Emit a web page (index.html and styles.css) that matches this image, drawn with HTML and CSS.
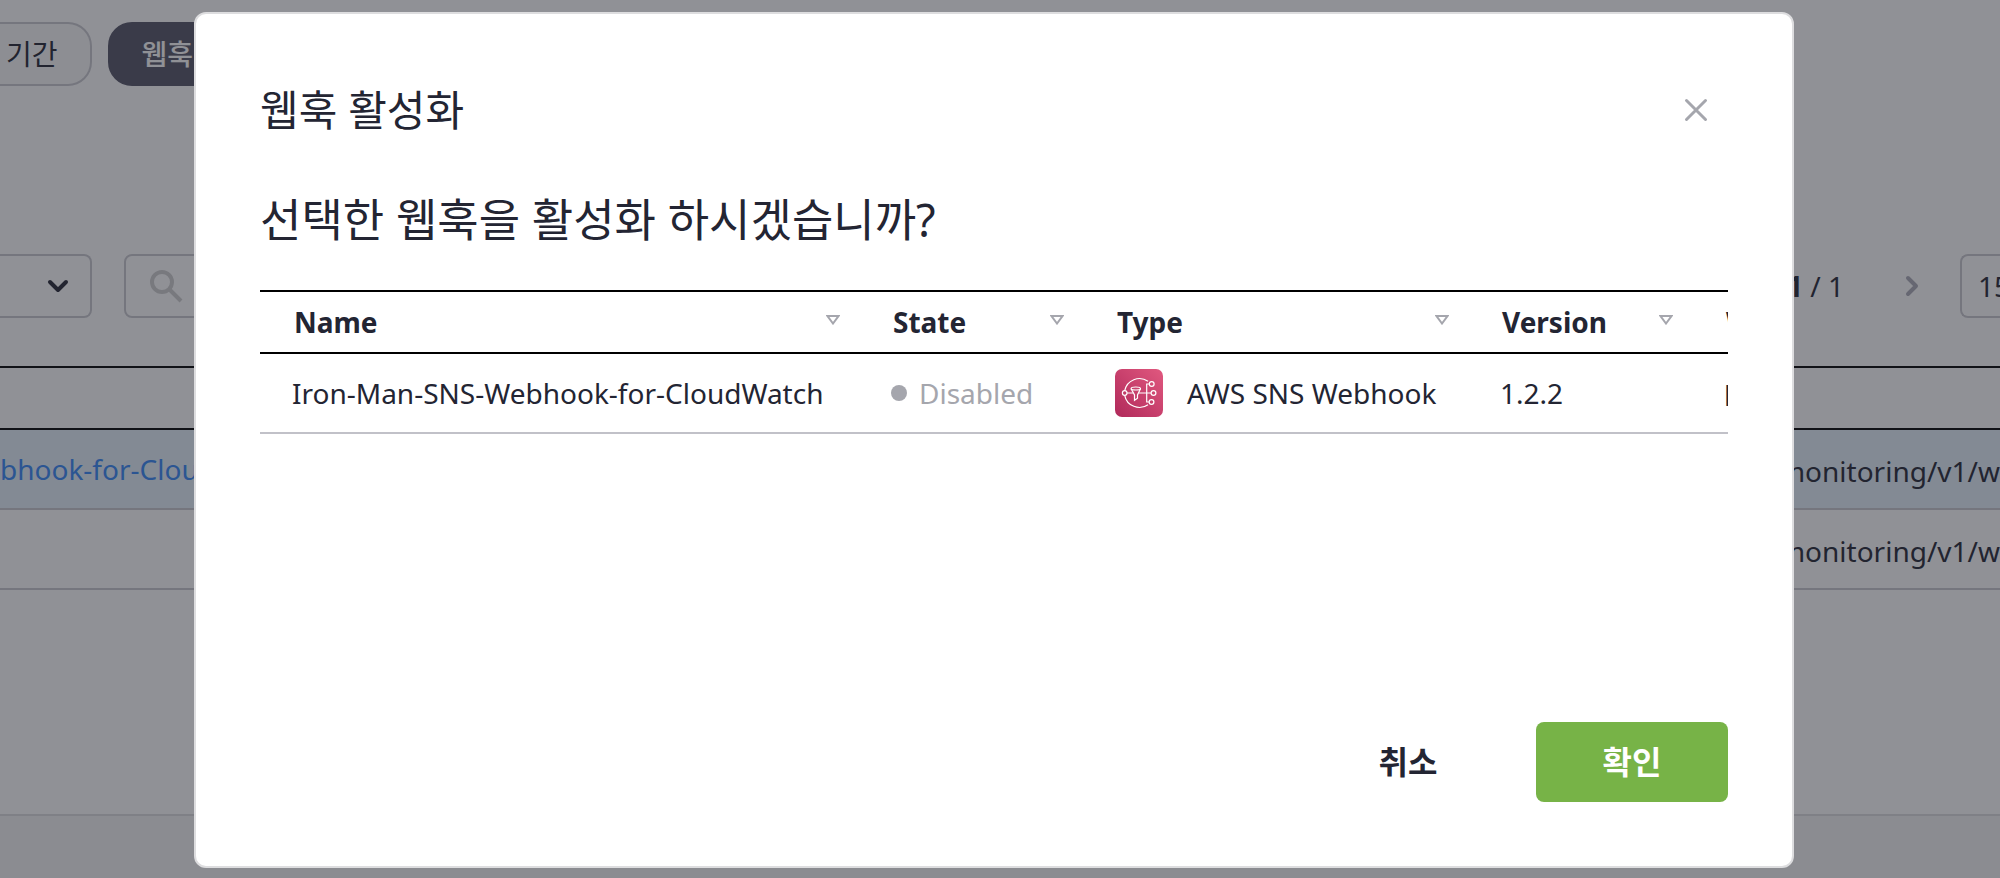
FILE: index.html
```html
<!DOCTYPE html>
<html lang="ko">
<head>
<meta charset="utf-8">
<meta name="viewport" content="width=device-width, initial-scale=1">
<title>웹훅 활성화</title>
<link rel="stylesheet" href="styles.css">
</head>
<body>
<div class="page" inert>
  <nav class="chips">
    <button class="chip chip-cut" type="button">기간</button>
    <button class="chip chip-active" type="button">웹훅</button>
  </nav>
  <div class="toolbar">
    <div class="dropdown">
      <select class="dropdown-select" aria-label="작업"><option></option></select>
      <svg class="dropdown-icon" width="24" height="24" viewBox="0 0 24 24"><path d="M4 8l8 8 8-8"/></svg>
    </div>
    <label class="search">
      <svg class="search-icon" width="36" height="36" viewBox="0 0 36 36"><circle cx="14" cy="14" r="10"/><path d="M22 22l11 11"/></svg>
      <input class="search-input" type="text" aria-label="검색">
    </label>
    <div class="pager">
      <span><b>1</b> / 1</span>
      <button class="pager-next" type="button" aria-label="다음">
        <svg width="24" height="24" viewBox="0 0 24 24"><path d="M8 4l8 8-8 8"/></svg>
      </button>
    </div>
    <select class="page-size" aria-label="페이지 크기"><option>15</option></select>
  </div>
  <table class="list">
    <thead><tr><th></th><th></th></tr></thead>
    <tbody>
      <tr class="selected"><td><a href="#">bhook-for-CloudWatch</a></td><td class="url">monitoring/v1/w</td></tr>
      <tr><td></td><td class="url">monitoring/v1/w</td></tr>
    </tbody>
  </table>
  <div class="page-footer"></div>
</div>

<div class="backdrop">
  <section class="modal" role="dialog" aria-modal="true" aria-labelledby="modal-title">
    <header class="modal-header">
      <h1 class="modal-title" id="modal-title">웹훅 활성화</h1>
      <button class="close" type="button" aria-label="닫기">
        <svg width="32" height="32" viewBox="0 0 32 32"><path d="M6.500 6.500l19 19M25.500 6.500l-19 19"/></svg>
      </button>
    </header>
    <p class="question">선택한 웹훅을 활성화 하시겠습니까?</p>
    <div class="table-wrap">
      <table class="grid">
        <colgroup><col class="col-name"><col class="col-small"><col class="col-type"><col class="col-small"><col class="col-url"></colgroup>
        <thead>
          <tr>
            <th><div class="head">Name<svg class="sort" width="14" height="10" viewBox="0 0 14 10"><path d="M1.500 1h11L7 8.500z"/></svg></div></th>
            <th><div class="head">State<svg class="sort" width="14" height="10" viewBox="0 0 14 10"><path d="M1.500 1h11L7 8.500z"/></svg></div></th>
            <th><div class="head">Type<svg class="sort" width="14" height="10" viewBox="0 0 14 10"><path d="M1.500 1h11L7 8.500z"/></svg></div></th>
            <th><div class="head">Version<svg class="sort" width="14" height="10" viewBox="0 0 14 10"><path d="M1.500 1h11L7 8.500z"/></svg></div></th>
            <th><div class="head">Webhook URL</div></th>
          </tr>
        </thead>
        <tbody>
          <tr>
            <td>Iron-Man-SNS-Webhook-for-CloudWatch</td>
            <td><span class="state">Disabled</span></td>
            <td>
              <div class="type">
                <svg width="48" height="48" viewBox="0 0 48 48">
                  <defs><linearGradient id="sns" x1="0" y1="1" x2="1" y2="0"><stop offset="0" stop-color="#b0295a"/><stop offset="1" stop-color="#e0587f"/></linearGradient></defs>
                  <rect width="48" height="48" rx="7" fill="url(#sns)"/>
                  <g fill="none" stroke="#fff" stroke-width="1.200">
                    <path d="M33 12.300A15 15 0 0 0 9.700 21.700M9.700 26.300A15 15 0 0 0 33 35.700"/>
                    <circle cx="9.700" cy="24" r="2.300"/>
                    <path d="M12 24h6M24 24h12M34.300 15h-2.600v18h2.600"/>
                    <circle cx="36.700" cy="15" r="2.400"/>
                    <circle cx="38.500" cy="24" r="2.400"/>
                    <circle cx="36.500" cy="33" r="2.400"/>
                    <ellipse cx="20.800" cy="19.500" rx="4.700" ry="1.500"/>
                    <path d="M16.100 19.700l3.400 6.300v5.300l3-2v-3.300l3-6.300"/>
                  </g>
                </svg>
                <span>AWS SNS Webhook</span>
              </div>
            </td>
            <td>1.2.2</td>
            <td class="url">https</td>
          </tr>
        </tbody>
      </table>
    </div>
    <footer class="actions">
      <button class="btn" type="button">취소</button>
      <button class="btn btn-primary" type="button">확인</button>
    </footer>
  </section>
</div>
</body>
</html>
```
FILE: styles.css
```css
* { box-sizing: border-box; }

body {
  margin: 0;
  background: #fff;
  color: #232533;
  font: 28px/40px "Noto Sans", "Noto Sans CJK KR", sans-serif;
}

button, input, select { font: inherit; color: inherit; margin: 0; }
button { padding: 0; border: 0; background: none; cursor: pointer; }
svg { display: block; flex: none; }
table { border-collapse: separate; border-spacing: 0; table-layout: fixed; }

/* List page */
.page {
  display: flex;
  flex-direction: column;
  height: 100vh;
  overflow: hidden;
}

.chips { display: flex; gap: 16px; padding-top: 22px; }
.chip {
  height: 64px;
  padding: 0 32px;
  border: 2px solid #c9c9cf;
  border-radius: 24px;
  background: #f9f9f9;
}
.chip-cut { padding-left: 6px; border-left: 0; border-radius: 0 24px 24px 0; }
.chip-active { border-color: #535365; background: #535365; color: #fff; font-weight: 500; }

.toolbar { display: flex; align-items: center; margin-top: 168px; }
.dropdown {
  display: flex;
  align-items: center;
  width: 92px;
  height: 64px;
  padding-right: 20px;
  border: 2px solid #c9c9cf;
  border-left: 0;
  border-radius: 0 8px 8px 0;
}
.dropdown-select { flex: 1; min-width: 0; border: 0; background: none; appearance: none; }
.dropdown-icon { fill: none; stroke: #232533; stroke-width: 4; stroke-linecap: round; stroke-linejoin: round; }
.search {
  display: flex;
  align-items: center;
  width: 40%;
  height: 64px;
  margin-left: 32px;
  padding: 0 22px;
  border: 2px solid #c9c9cf;
  border-radius: 8px;
}
.search-icon { fill: none; stroke: #cfcfcf; stroke-width: 4; }
.search-input { flex: 1; border: 0; background: none; }
.pager { display: flex; align-items: center; gap: 56px; margin-left: auto; }
.pager-next svg { fill: none; stroke: #ababb7; stroke-width: 4; stroke-linecap: round; stroke-linejoin: round; }
.page-size {
  width: 40px;
  height: 64px;
  margin-left: 36px;
  padding: 0 0 0 16px;
  border: 2px solid #c9c9cf;
  border-right: 0;
  border-radius: 8px 0 0 8px;
  background: none;
  appearance: none;
}

.list { width: 100%; margin-top: 48px; }
.list th { height: 64px; padding: 0; border: solid #000; border-width: 2px 0; }
.list td { height: 80px; padding: 0; border-bottom: 2px solid #c9c9cf; }
.list .url { padding-top: 4px; text-align: right; }
.list a { color: #3587f7; text-decoration: none; }
.selected td { background: #e5f1fb; }
.page-footer { height: 64px; margin-top: auto; border-top: 2px solid #dddddf; background: #f5f5f5; }

/* Modal */
.backdrop {
  position: fixed;
  inset: 0;
  display: flex;
  padding: 12px 206px 10px 194px;
  background: rgba(33, 35, 45, 0.5);
}
.modal {
  display: flex;
  flex: 1;
  flex-direction: column;
  min-width: 0;
  padding: 64px;
  border: 2px solid #dddddf;
  border-radius: 12px;
  background: #fff;
}
.modal-header { display: flex; align-items: center; justify-content: space-between; height: 64px; }
.modal-title { margin: 0; font-size: 42px; line-height: 64px; font-weight: 400; }
.close { padding: 16px; }
.close svg { fill: none; stroke: #a5a6ad; stroke-width: 3; stroke-linecap: round; }
.question { margin: 48px 0 40px; font-size: 45px; line-height: 60px; font-weight: 400; }

.table-wrap { overflow: hidden; }
.grid { width: 1834px; }
.col-name { width: 601px; }
.col-small { width: 224px; }
.col-type { width: 385px; }
.col-url { width: 400px; }
.grid th {
  height: 64px;
  padding: 0 21px 0 32px;
  border: solid #000;
  border-width: 2px 0;
  font-weight: 700;
  text-align: left;
}
.grid td { height: 80px; padding: 0 0 0 30px; border-bottom: 2px solid #c1c1c8; white-space: nowrap; }
.grid th:first-child { padding-left: 34px; }
.grid td:first-child { padding-left: 32px; }
.grid .url { padding-top: 4px; }
.head { display: flex; align-items: center; justify-content: space-between; white-space: nowrap; }
.sort { margin-bottom: 4px; fill: none; stroke: #a5a6ad; stroke-width: 2; }
.state { display: flex; align-items: center; gap: 12px; color: #a5a6ad; }
.state::before { content: ""; width: 16px; height: 16px; border-radius: 50%; background: #a5a6ad; }
.type { display: flex; align-items: center; gap: 24px; }

.actions { display: flex; justify-content: flex-end; gap: 32px; margin-top: auto; }
.btn { width: 192px; height: 80px; border-radius: 8px; font-size: 32px; font-weight: 700; }
.btn-primary { background: #77b347; color: #fff; }
```
